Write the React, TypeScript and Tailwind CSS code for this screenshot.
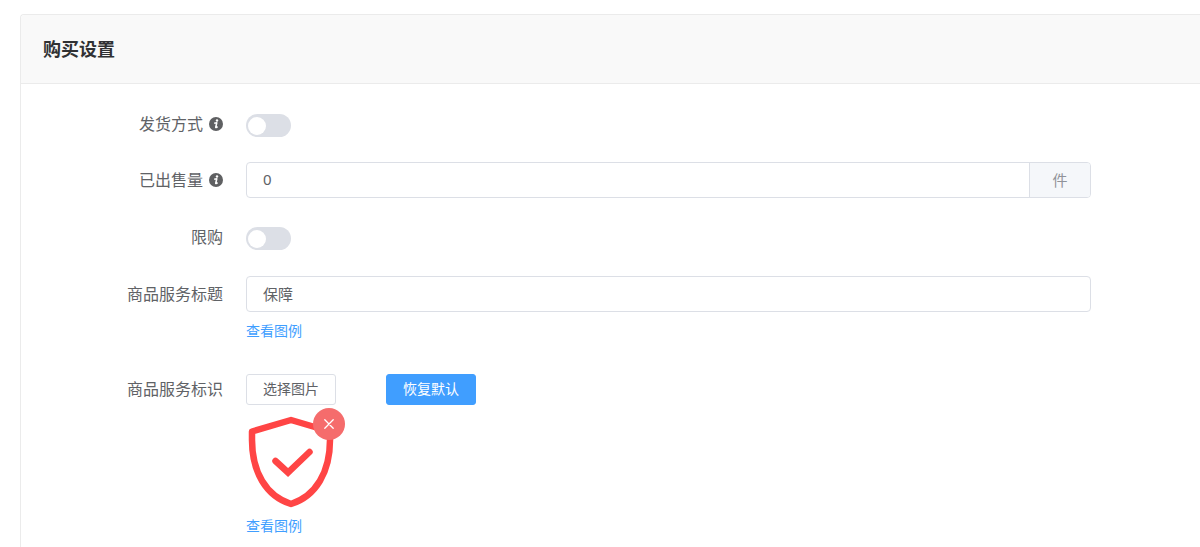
import React, { useState } from 'react';

const InfoIcon = () => (
  <svg viewBox="0 0 14 14" className="w-3.5 h-3.5 shrink-0" aria-hidden="true">
    <circle cx="7" cy="7" r="7" fill="#5f6062" />
    <circle cx="8" cy="3.5" r="1.200" fill="#fff" />
    <path d="M5.2 6.200 7.800 5.700 6.700 10.200Q6.500 11.200 8.600 9.700" fill="none" stroke="#fff" strokeWidth="1.5" strokeLinejoin="round" />
  </svg>
);

const ShieldIcon = () => (
  <svg viewBox="0 0 90 94" className="w-[90px] h-[94px]" fill="none" stroke="#ff4545" strokeLinejoin="round" strokeLinecap="round" aria-hidden="true">
    <path d="M45 6 6 17.500V26C6 58 20 82 45 90 70 82 84 58 84 26V17.500Z" strokeWidth="6.500" />
    <path d="M29.500 47 42 58.500 63.500 38" strokeWidth="6.500" strokeLinejoin="miter" />
  </svg>
);

type SwitchProps = {
  id: string;
  checked: boolean;
  onChange: (value: boolean) => void;
};

const Switch = ({ id, checked, onChange }: SwitchProps) => (
  <div className="flex pt-2">
    <input
      id={id}
      type="checkbox"
      role="switch"
      checked={checked}
      onChange={(e) => onChange(e.target.checked)}
      className="appearance-none w-[45px] h-[23px] rounded-full bg-[#dcdfe6] checked:bg-[#409eff] cursor-pointer flex items-center px-0.5 before:block before:w-[18px] before:h-[18px] before:rounded-full before:bg-white checked:before:ml-auto"
    />
  </div>
);

type FieldProps = {
  label: string;
  htmlFor: string;
  info?: boolean;
  className?: string;
  children: React.ReactNode;
};

const Field = ({ label, htmlFor, info, className, children }: FieldProps) => (
  <div className={`flex items-start ${className ?? ''}`}>
    <label htmlFor={htmlFor} className="w-[225px] shrink-0 h-9 pr-[23px] flex items-center justify-end gap-1.5 text-base text-[#606266]">
      {label}
      {info && <InfoIcon />}
    </label>
    <div className="flex-1 min-w-0 min-h-9">{children}</div>
  </div>
);

const ExampleLink = () => (
  <a href="#example" className="block w-fit text-sm leading-5 text-[#409eff]">
    查看图例
  </a>
);

const App = () => {
  const [delivery, setDelivery] = useState(false);
  const [limited, setLimited] = useState(false);
  const [sold, setSold] = useState('0');
  const [title, setTitle] = useState('保障');
  const [hasImage, setHasImage] = useState(true);

  return (
    <div className="min-h-screen bg-white pl-5 pt-3.5 flex flex-col font-['Noto_Sans','Noto_Sans_CJK_SC',sans-serif]">
      <section className="flex-1 border-l border-t border-[#ebebeb] rounded-tl">
        <header className="h-[69px] px-[22px] flex items-center bg-[#f9f9f9] border-b border-[#ebebeb] rounded-tl">
          <h2 className="text-lg font-bold text-[#303133]">购买设置</h2>
        </header>

        <form className="pt-[22px] pr-[109px]" onSubmit={(e) => e.preventDefault()}>
          <Field label="发货方式" htmlFor="delivery" info className="mb-5">
            <Switch id="delivery" checked={delivery} onChange={setDelivery} />
          </Field>

          <Field label="已出售量" htmlFor="sold" info className="mb-[21px]">
            <div className="flex h-9 rounded border border-[#dcdfe6] overflow-hidden text-[15px]">
              <input
                id="sold"
                value={sold}
                onChange={(e) => setSold(e.target.value)}
                className="flex-1 min-w-0 px-4 pb-0.5 text-[#606266] outline-none"
              />
              <span className="w-[61px] flex items-center justify-center bg-[#f5f7fa] border-l border-[#dcdfe6] text-[#909399]">件</span>
            </div>
          </Field>

          <Field label="限购" htmlFor="limited" className="mb-[21px]">
            <Switch id="limited" checked={limited} onChange={setLimited} />
          </Field>

          <Field label="商品服务标题" htmlFor="title" className="mb-[30px]">
            <input
              id="title"
              value={title}
              onChange={(e) => setTitle(e.target.value)}
              className="w-full h-9 mb-[9px] px-4 pb-0.5 rounded border border-[#dcdfe6] text-[15px] text-[#606266] outline-none"
            />
            <ExampleLink />
          </Field>

          <Field label="商品服务标识" htmlFor="choose">
            <div className="flex pt-[3px] gap-[50px]">
              <button id="choose" type="button" className="h-[31px] px-4 pb-px rounded-[3px] border border-[#dcdfe6] text-sm text-[#606266]">
                选择图片
              </button>
              <button type="button" onClick={() => setHasImage(true)} className="h-[31px] px-4 pb-px rounded-[3px] border border-[#409eff] bg-[#409eff] text-sm text-white">
                恢复默认
              </button>
            </div>
            {hasImage && (
              <div className="relative w-[90px] mt-[9px] mb-2">
                <ShieldIcon />
                <button
                  type="button"
                  aria-label="删除"
                  onClick={() => setHasImage(false)}
                  className="absolute -top-1.5 -right-[9px] w-8 h-8 rounded-full bg-[#f56c6c] flex items-center justify-center"
                >
                  <svg viewBox="0 0 10 10" className="w-2.5 h-2.5" stroke="#fff" strokeWidth="1.3" strokeLinecap="round">
                    <path d="M0.8 0.8 9.200 9.200M9.200 0.8 0.8 9.200" />
                  </svg>
                </button>
              </div>
            )}
            <ExampleLink />
          </Field>
        </form>
      </section>
    </div>
  );
};

export default App;
